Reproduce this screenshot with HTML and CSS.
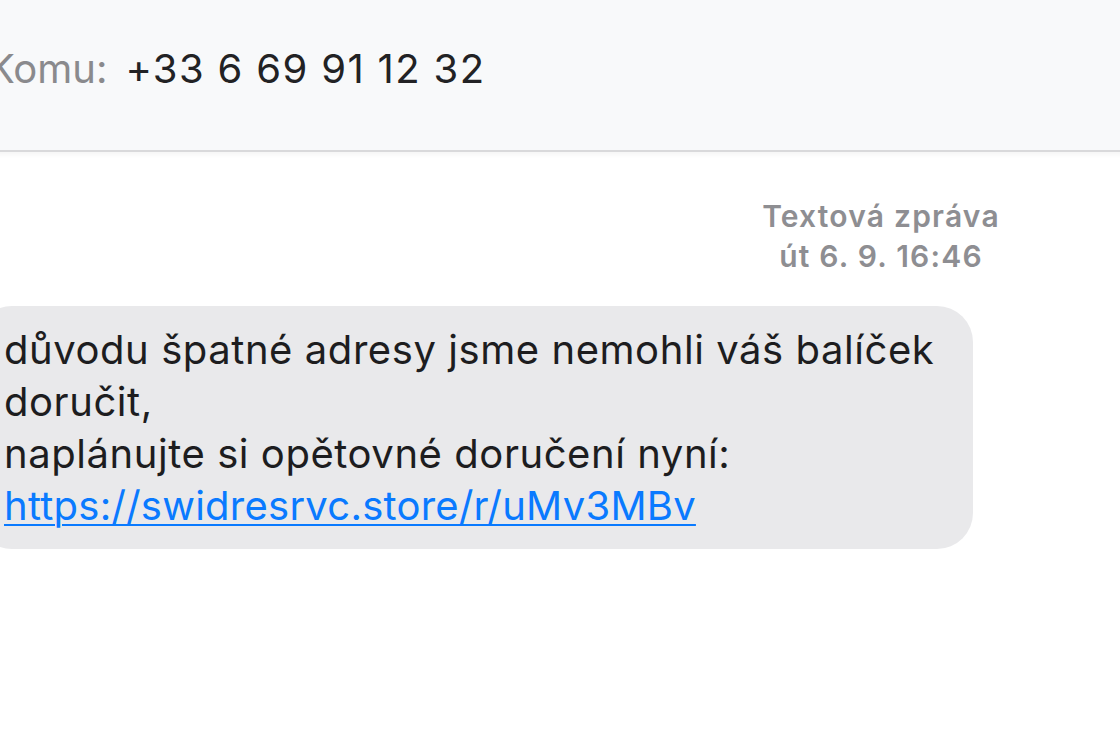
FILE: index.html
```html
<!DOCTYPE html>
<html lang="cs">
<head>
<meta charset="utf-8">
<title>Zprávy</title>
<link rel="stylesheet" href="styles.css">
</head>
<body>
<div class="pane">
  <header class="to-bar">
    <span class="to-label">Komu:</span>
    <span class="to-number">+33 6 69 91 12 32</span>
  </header>
  <main class="conversation">
    <div class="stamp">
      <div class="stamp-kind">Textová zpráva</div>
      <div class="stamp-time">út 6. 9. 16:46</div>
    </div>
    <div class="row">
      <div class="bubble">důvodu špatné adresy jsme nemohli váš balíček<br>doručit,<br>naplánujte si opětovné doručení nyní:<br><a class="link" href="#">https://swidresrvc.store/r/uMv3MBv</a></div>
    </div>
  </main>
</div>
</body>
</html>
```

FILE: styles.css
```css
html, body {
  margin: 0;
  padding: 0;
  background: #ffffff;
  overflow: hidden;
  width: 1120px;
  height: 744px;
}

body {
  font-family: Inter, "Noto Sans", "Liberation Sans", sans-serif;
  color: #1d1d1f;
}

.pane {
  width: 1842px;
  margin-left: -40px;
}

.to-bar {
  background: #f8f9fa;
  border-bottom: 2px solid #d9d9db;
  box-shadow: 0 2px 6px rgba(0, 0, 0, 0.05);
  display: flex;
  align-items: flex-start;
  padding-left: 28px;
  padding-top: 40px;
  height: 110px;
  gap: 18px;
  font-size: 40px;
  line-height: 58px;
}

.to-label {
  color: #8a8a8d;
}

.to-number {
  color: #222224;
  letter-spacing: 1.35px;
}

.conversation {
  display: flex;
  flex-direction: column;
  padding-top: 44px;
}

.stamp {
  text-align: center;
  font-size: 30px;
  line-height: 40px;
  font-weight: 600;
  letter-spacing: 1.2px;
  color: #8e8e92;
}

.row {
  display: flex;
  padding-top: 30px;
  padding-left: 16px;
}

.bubble {
  background: #e9e9eb;
  border-radius: 36px;
  padding: 18px 34px 17px 28px;
  font-size: 40px;
  line-height: 52px;
  letter-spacing: 0.56px;
  color: #1d1d1f;
  width: 935px;
}

.link {
  color: #0a7aff;
  letter-spacing: 0.25px;
  text-decoration: underline;
  text-decoration-thickness: 2px;
  text-underline-offset: 4px;
}
```
